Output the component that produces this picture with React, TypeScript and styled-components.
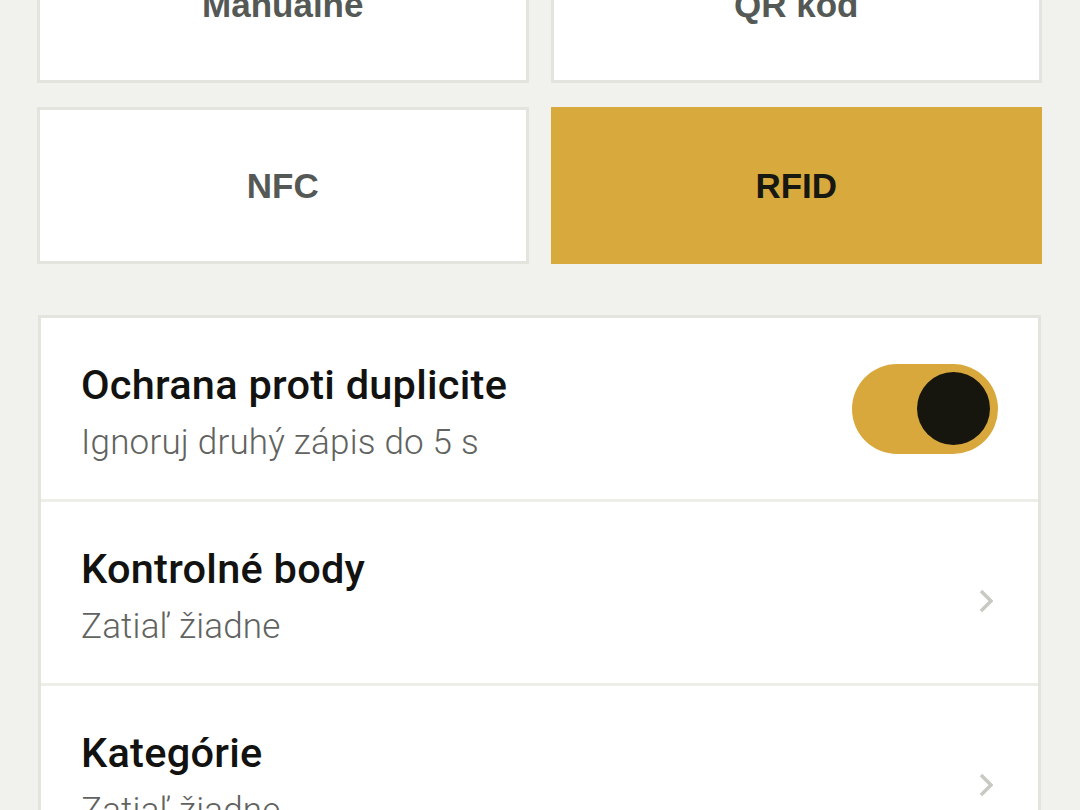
import React from "react";
import styled, { createGlobalStyle } from "styled-components";

const Global = createGlobalStyle`
  html, body { margin: 0; padding: 0; background: #f1f1ed; }
  body { overflow: hidden; }
  * { box-sizing: border-box; }
`;

const Screen = styled.div`
  width: 1080px;
  height: 810px;
  overflow: hidden;
  background: #f1f1ed;
  padding: 0 38px 0 37px;
`;

const Scroller = styled.div`
  margin-top: -74px;
  display: flex;
  flex-direction: column;
  gap: 51px;
`;

const ModeGrid = styled.div`
  display: grid;
  grid-template-columns: 1fr 1fr;
  column-gap: 22px;
  row-gap: 24px;
`;

const ModeButton = styled.button<{ $active?: boolean }>`
  height: 157px;
  border: 3px solid ${(p) => (p.$active ? "#d8a93c" : "#e4e4df")};
  background: ${(p) => (p.$active ? "#d8a93c" : "#ffffff")};
  color: ${(p) => (p.$active ? "#181812" : "#555955")};
  font-family: "Liberation Sans", Arial, sans-serif;
  font-weight: 700;
  font-size: 35px;
  display: flex;
  align-items: center;
  justify-content: center;
  padding: 0;
  margin: 0;
`;

const Card = styled.div`
  margin: 0 1px 0 1px;
  background: #ffffff;
  border: 3px solid #e4e4df;
  border-bottom: none;
`;

const Row = styled.div`
  height: 184px;
  border-bottom: 3px solid #eeeee9;
  display: flex;
  justify-content: space-between;
  align-items: center;
  padding: 0 40px;
`;

const TextBlock = styled.div`
  align-self: flex-start;
  padding-top: 43px;
  display: flex;
  flex-direction: column;
  gap: 14px;
`;

const Title = styled.div`
  font-family: Roboto, "Noto Sans", sans-serif;
  font-weight: 500;
  font-size: 41.5px;
  line-height: 48px;
  color: #121210;
  letter-spacing: 0.25px;
`;

const Subtitle = styled.div`
  font-family: Roboto, "Noto Sans", sans-serif;
  font-weight: 300;
  font-size: 35px;
  line-height: 40px;
  color: #616360;
  letter-spacing: 0.2px;
`;

const Toggle = styled.div<{ $on?: boolean }>`
  width: 146px;
  height: 90px;
  border-radius: 45px;
  background: ${(p) => (p.$on ? "#d8a83c" : "#dcdcd6")};
  display: flex;
  align-items: center;
  justify-content: ${(p) => (p.$on ? "flex-end" : "flex-start")};
  padding: 0 8px;
`;

const Knob = styled.div`
  width: 73px;
  height: 73px;
  border-radius: 50%;
  background: #16160f;
`;

const Chevron = styled.svg`
  width: 14px;
  height: 24px;
  margin-top: 16px;
  margin-right: 5px;
`;

const ChevronIcon = () => (
  <Chevron viewBox="0 0 14 24">
    <path d="M2 2 L12 12 L2 22" fill="none" stroke="#c9c9c3" strokeWidth="3.4" />
  </Chevron>
);

export default function App() {
  return (
    <>
      <Global />
      <Screen>
        <Scroller>
          <ModeGrid>
            <ModeButton>Manuálne</ModeButton>
            <ModeButton>QR kód</ModeButton>
            <ModeButton>NFC</ModeButton>
            <ModeButton $active>RFID</ModeButton>
          </ModeGrid>
          <Card>
            <Row>
              <TextBlock>
                <Title>Ochrana proti duplicite</Title>
                <Subtitle>Ignoruj druhý zápis do 5 s</Subtitle>
              </TextBlock>
              <Toggle $on>
                <Knob />
              </Toggle>
            </Row>
            <Row>
              <TextBlock>
                <Title>Kontrolné body</Title>
                <Subtitle>Zatiaľ žiadne</Subtitle>
              </TextBlock>
              <ChevronIcon />
            </Row>
            <Row>
              <TextBlock>
                <Title>Kategórie</Title>
                <Subtitle>Zatiaľ žiadne</Subtitle>
              </TextBlock>
              <ChevronIcon />
            </Row>
          </Card>
        </Scroller>
      </Screen>
    </>
  );
}
